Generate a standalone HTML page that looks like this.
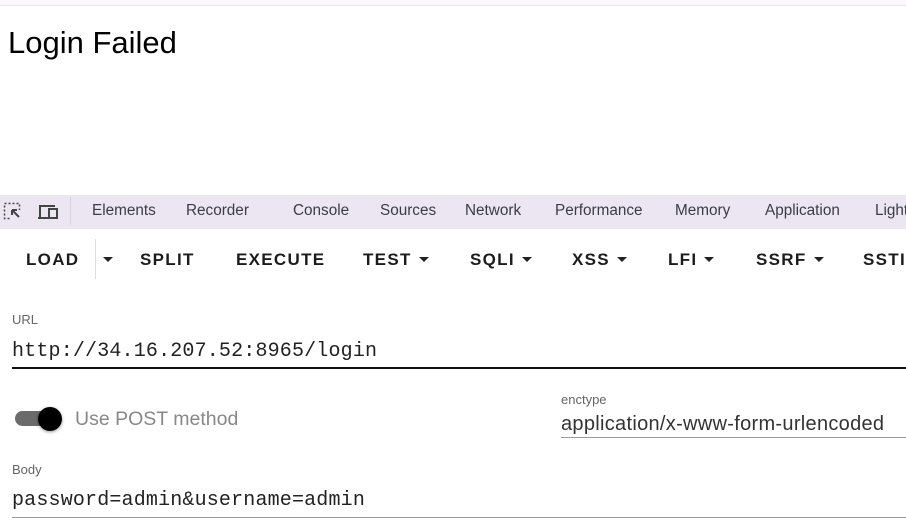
<!DOCTYPE html>
<html><head><meta charset="utf-8"><style>
*{margin:0;padding:0;box-sizing:border-box}
body{width:906px;height:525px;overflow:hidden;background:#fff;font-family:"Liberation Sans",sans-serif;position:relative}
.a{position:absolute;white-space:nowrap}
.top{left:0;top:0;width:906px;height:6px;background:#fbf6fc;border-bottom:1px solid #ece4ef}
h1{position:absolute;left:8px;top:25px;font-size:31px;font-weight:normal;color:#000}
.dt{left:0;top:195px;width:906px;height:34px;background:#ece6f3}
.tab{top:202px;font-size:15.3px;color:#3c3c44}
.btn{top:250px;font-size:17px;font-weight:bold;letter-spacing:1.3px;color:#1c1c1c}
.car{display:inline-block;width:0;height:0;border-left:5px solid transparent;border-right:5px solid transparent;border-top:5px solid #222;vertical-align:middle;margin-left:7px;margin-top:-3px}
.lbl{font-size:13px;color:#666}
.mono{font-family:"Liberation Mono",monospace;color:#222}
</style></head><body>
<div class="a top"></div>
<h1>Login Failed</h1>
<div class="a dt"></div>
<svg class="a" style="left:3px;top:202px" width="60" height="20" viewBox="0 0 60 20">
<rect x="1.5" y="1.5" width="15" height="15" fill="none" stroke="#444" stroke-width="1.5" stroke-dasharray="2 2"/>
<rect x="8" y="8" width="10" height="10" fill="#ece6f3"/>
<path d="M9 8 L16 15 M9 8 H14 M9 8 V13" stroke="#444" stroke-width="2" fill="none"/>
<path d="M37 15 V4 H52 M35 16 H45" stroke="#444" stroke-width="2" fill="none"/>
<rect x="46" y="7" width="8" height="9" fill="none" stroke="#444" stroke-width="2"/>
</svg>
<div class="a" style="left:70px;top:197px;width:1px;height:28px;background:#d8d0e0"></div>
<div class="a tab" style="left:92px">Elements</div>
<div class="a tab" style="left:186px">Recorder</div>
<div class="a tab" style="left:293px">Console</div>
<div class="a tab" style="left:380px">Sources</div>
<div class="a tab" style="left:465px">Network</div>
<div class="a tab" style="left:555px">Performance</div>
<div class="a tab" style="left:675px">Memory</div>
<div class="a tab" style="left:765px">Application</div>
<div class="a tab" style="left:875px">Lighthouse</div>
<div class="a btn" style="left:26px">LOAD</div>
<div class="a" style="left:95px;top:239px;width:1px;height:40px;background:#ddd"></div>
<div class="a btn" style="left:96px"><span class="car"></span></div>
<div class="a btn" style="left:140px">SPLIT</div>
<div class="a btn" style="left:236px">EXECUTE</div>
<div class="a btn" style="left:363px">TEST<span class="car"></span></div>
<div class="a btn" style="left:470px">SQLI<span class="car"></span></div>
<div class="a btn" style="left:572px">XSS<span class="car"></span></div>
<div class="a btn" style="left:668px">LFI<span class="car"></span></div>
<div class="a btn" style="left:756px">SSRF<span class="car"></span></div>
<div class="a btn" style="left:863px">SSTI</div>
<div class="a lbl" style="left:12px;top:312px">URL</div>
<div class="a mono" style="left:12px;top:340px;font-size:20px;letter-spacing:0.17px">http://34.16.207.52:8965/login</div>
<div class="a" style="left:12px;top:367px;width:894px;height:2px;background:#111"></div>
<div class="a" style="left:15px;top:411px;width:46px;height:15px;border-radius:8px;background:#6b6b6b"></div>
<div class="a" style="left:38px;top:407px;width:24px;height:24px;border-radius:50%;background:#000;box-shadow:0 1px 3px rgba(0,0,0,.4)"></div>
<div class="a" style="left:75px;top:408px;font-size:19.5px;color:#888">Use POST method</div>
<div class="a lbl" style="left:561px;top:392px">enctype</div>
<div class="a" style="left:561px;top:413px;font-size:20px;letter-spacing:0.3px;color:#333">application/x-www-form-urlencoded</div>
<div class="a" style="left:561px;top:437px;width:345px;height:1px;background:#999"></div>
<div class="a lbl" style="left:12px;top:462px">Body</div>
<div class="a mono" style="left:12px;top:489px;font-size:20px;letter-spacing:0.17px">password=admin&amp;username=admin</div>
<div class="a" style="left:12px;top:517px;width:894px;height:1px;background:#999"></div>
</body></html>
